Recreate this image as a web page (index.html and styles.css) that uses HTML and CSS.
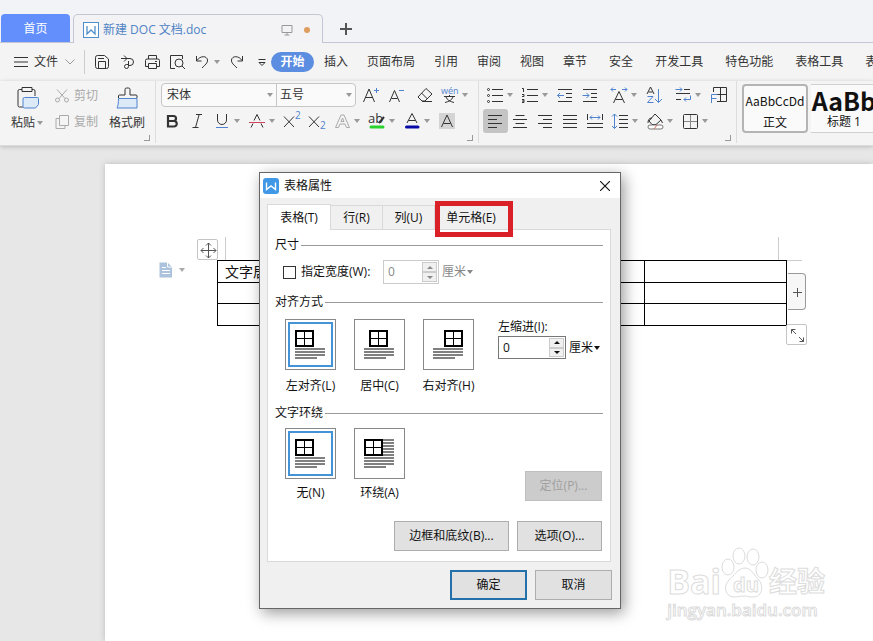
FILE: index.html
```html
<!DOCTYPE html>
<html lang="zh-CN">
<head>
<meta charset="utf-8">
<title>新建 DOC 文档.doc</title>
<link rel="stylesheet" href="styles.css">
</head>
<body>
<header class="tabstrip">
  <button class="home-tab">首页</button>
  <div class="doc-tab">
    <svg class="doc-logo" viewBox="0 0 16 16"><rect x=".5" y=".5" width="15" height="15" fill="#fff"/><path d="M4 4v8l4-4 4 4V4" stroke-width="1.3"/></svg>
    <span class="doc-name">新建 DOC 文档.doc</span>
    <svg class="doc-screen" viewBox="0 0 12 12"><path d="M1 1.500h10v7H1zM6 8.500v2.500M3.500 11h5"/></svg>
    <span class="unsaved"></span>
  </div>
  <button class="new-tab" aria-label="新建标签"><svg viewBox="0 0 12 12"><path d="M6 0v12M0 6h12" stroke-width="2"/></svg></button>
</header>

<nav class="menubar">
  <button class="file-menu">
    <svg class="burger" viewBox="0 0 14 10"><path d="M0 .5h14M0 5h14M0 9.500h14"/></svg>
    文件
    <svg class="chev" viewBox="0 0 10 6"><path d="M.5.5 5 5 9.500.5" stroke="#999"/></svg>
  </button>
  <div class="quick">
    <button class="tool" aria-label="保存"><svg viewBox="0 0 20 20"><path d="M3.500 5.500a2 2 0 0 1 2-2h7l4 3.500v7.500a2 2 0 0 1-2 2h-9a2 2 0 0 1-2-2zM6.500 16.500V9.500h7v7M6 6.500h6"/></svg></button>
    <button class="tool" aria-label="输出"><svg viewBox="0 0 20 20"><path d="M4 6.500h9a3.500 3.500 0 0 1 0 7h-1.500M7 3.500l3 3-3 3M11.500 9v5.500a2 2 0 1 1-2-2h2"/></svg></button>
    <button class="tool" aria-label="打印"><svg viewBox="0 0 20 20"><path d="M6.500 7V3.500h8V7M6 14.500H3.500v-6a1.500 1.500 0 0 1 1.500-1.500h11a1.500 1.500 0 0 1 1.500 1.500v6H15M6.500 11.500h8v5h-8zM13 9.500h2"/></svg></button>
    <button class="tool" aria-label="打印预览"><svg viewBox="0 0 20 20"><path d="M8 16.500H3.500v-13h12V7"/><circle cx="12" cy="11" r="4"/><path d="m15 14 3 3"/></svg></button>
    <button class="tool drop" aria-label="撤销"><svg viewBox="0 0 20 20"><path d="M4.500 4v5h5M5 8.500c3-5 10-5 10.500-.5.3 3-2.500 5-5.500 8"/></svg></button>
    <button class="tool" aria-label="恢复"><svg viewBox="0 0 20 20"><path d="M15.500 4v5h-5M15 8.500c-3-5-10-5-10.500-.5-.3 3 2.500 5 5.500 8"/></svg></button>
    <button class="tool" aria-label="更多"><svg viewBox="0 0 20 20"><path d="M6.500 7.500h7M7 10.500h6l-3 3z"/></svg></button>
  </div>
  <div class="menus">
    <button class="menu on">开始</button>
    <button class="menu">插入</button>
    <button class="menu">页面布局</button>
    <button class="menu">引用</button>
    <button class="menu">审阅</button>
    <button class="menu">视图</button>
    <button class="menu">章节</button>
    <button class="menu wide">安全</button>
    <button class="menu wide">开发工具</button>
    <button class="menu wide">特色功能</button>
    <button class="menu wide">表格工具</button>
    <button class="menu wide">表格样式</button>
  </div>
</nav>

<section class="ribbon">
  <div class="group clipboard">
    <button class="big drop-text">
      <svg viewBox="0 0 24 24"><path d="M7 4.500H4.500a1.500 1.500 0 0 0-1.500 1.500v14.500a1.500 1.500 0 0 0 1.500 1.500H8M17 4.500h1.500A1.500 1.500 0 0 1 20 6v5M7 2.500h10v4H7z"/><path class="bluefill" d="M9.500 12.500h13a1 1 0 0 1 1 1v6l-3 3.500h-11a1.500 1.500 0 0 1-1.500-1.500v-7.500a1.500 1.500 0 0 1 1.500-1.500z"/></svg>
      <span>粘贴</span>
    </button>
    <div class="pair">
      <button class="small" disabled><svg viewBox="0 0 16 16"><circle cx="3.500" cy="12" r="2"/><circle cx="12.500" cy="12" r="2"/><path d="M13 1.500 5 10.500M3 1.500l8 9"/></svg>剪切</button>
      <button class="small" disabled><svg viewBox="0 0 16 16"><path d="M5.500 1.500h9v10h-9zM5 4.500H2v10h9V12"/></svg>复制</button>
    </div>
    <button class="big">
      <svg viewBox="0 0 24 24"><path d="M3.500 13v-2a1 1 0 0 1 1-1H10V4.500A1.500 1.500 0 0 1 11.500 3h2A1.500 1.500 0 0 1 15 4.500V10h6a1 1 0 0 1 1 1v2"/><path class="bluefill" d="M3.500 13.500H22v9.500H2c1-2 1.500-5 1.500-9.500z"/></svg>
      <span>格式刷</span>
    </button>
  </div>

  <div class="group">
    <div class="row">
      <div class="combos">
        <span class="combo name"><select aria-label="字体"><option>宋体</option></select></span>
        <span class="combo size"><select aria-label="字号"><option>五号</option></select></span>
      </div>
      <button class="tool" aria-label="增大字号"><svg viewBox="0 0 20 20"><path d="M2.500 17 8 4l5.500 13M4.500 12.500h7"/><path class="b" d="M13 5.500h5M15.500 3v5"/></svg></button>
      <button class="tool" aria-label="减小字号"><svg viewBox="0 0 20 20"><path d="M3.500 17 8.500 5.500 13.500 17M5.500 13.500h6"/><path class="b" d="M13 5.500h5"/></svg></button>
      <button class="tool apart" aria-label="清除格式"><svg viewBox="0 0 20 20"><path d="m11 3.500 6 5.500-7 7H7l-4-4zM6.500 8l6 6M7 16.500h10"/></svg></button>
      <button class="tool drop" aria-label="拼音指南"><svg viewBox="0 0 20 20"><text class="btxt" x="1" y="9" font-size="9">wén</text><path d="M4 11.500h11M9.500 10v1.500M6 12c1 3 4 4.500 8 5.500M13 12c-1 3-4 4.500-8 5.500"/></svg></button>
    </div>
    <div class="row">
      <button class="tool" aria-label="加粗"><svg viewBox="0 0 20 20"><path stroke-width="2.200" d="M6 5h5.500a2.500 2.500 0 0 1 0 5H6zM6 10h6a2.600 2.600 0 0 1 0 5.500H6z"/></svg></button>
      <button class="tool" aria-label="倾斜"><svg viewBox="0 0 20 20"><path d="M9 3.500h6M5.500 16.500h6M12 4 8.500 16.500"/></svg></button>
      <button class="tool drop" aria-label="下划线"><svg viewBox="0 0 20 20"><path d="M5.500 3v6a4.500 4.500 0 0 0 9 0V3"/><path class="b" d="M4 16.500h12"/></svg></button>
      <button class="tool drop" aria-label="删除线"><svg viewBox="0 0 20 20"><path d="M4 16.500l2-4M16 16.500l-2-4M7 9.500l3-6 3 6"/><path d="M2 11.500h16" stroke="#d0455c"/></svg></button>
      <button class="tool" aria-label="上标"><svg viewBox="0 0 20 20"><path d="m2 5.500 10 10.500M12 5.500 2 16"/><text class="btxt" x="13" y="8" font-size="10">2</text></svg></button>
      <button class="tool" aria-label="下标"><svg viewBox="0 0 20 20"><path d="m2 5.500 10 10.500M12 5.500 2 16"/><text class="btxt" x="13" y="18" font-size="10">2</text></svg></button>
      <button class="tool drop faint" aria-label="文字效果"><svg viewBox="0 0 20 20"><path d="M3.500 16.500 9 4h3l5.500 12.500h-3L13 13H8l-1.500 3.500zM9 10.500h3L10.500 7z"/></svg></button>
      <button class="tool drop" aria-label="突出显示"><svg viewBox="0 0 20 20"><text class="ktxt" x="1" y="12" font-size="13">ab</text><path d="m12 12 5-6" stroke-width="2"/><path d="M4 16h12" stroke="#25d32c" stroke-width="3" stroke-linecap="round"/></svg></button>
      <button class="tool drop" aria-label="字体颜色"><svg viewBox="0 0 20 20"><path d="m5 12 5-9.500L15 12M6.500 9.500h7"/><path d="M4.500 16h11.500" stroke="#0909a8" stroke-width="3" stroke-linecap="round"/></svg></button>
      <button class="tool" aria-label="字符底纹"><svg viewBox="0 0 20 20"><path d="M2 2h16v16H2z" fill="#d4d4d4" stroke="none"/><path d="M4.500 16 10 4l5.500 12M6.500 12.500h7"/></svg></button>
    </div>
  </div>

  <div class="group">
    <div class="row">
      <button class="tool drop" aria-label="项目符号"><svg viewBox="0 0 20 20"><path d="M7 4.500h11M7 10.500h11M7 16.500h11"/><circle cx="3.500" cy="4.500" r="1"/><circle cx="3.500" cy="10.500" r="1"/><circle cx="3.500" cy="16.500" r="1"/></svg></button>
      <button class="tool drop" aria-label="编号"><svg viewBox="0 0 20 20"><path d="M7 4.500h11M7 10.500h11M7 16.500h11M2 3.500h1.500V7M2 9.500h2v2H2M2 14.500h2v3H2M2 16h2"/></svg></button>
      <button class="tool" aria-label="减少缩进"><svg viewBox="0 0 20 20"><path d="M3 4.500h14M11 8.500h6M11 12.500h6M3 16.500h14"/><path class="b" d="M9 10.500H2.500M5 8l-2.500 2.500L5 13"/></svg></button>
      <button class="tool" aria-label="增加缩进"><svg viewBox="0 0 20 20"><path d="M3 4.500h14M11 8.500h6M11 12.500h6M3 16.500h14"/><path class="b" d="M2.500 10.500H9M6.500 8 9 10.500 6.500 13"/></svg></button>
      <button class="tool drop apart" aria-label="中文版式"><svg viewBox="0 0 20 20"><path d="M4.500 18 10 6.500 15.500 18M6.500 14.500h7"/><path class="b" d="M2 4.500h5M4 2.500l-2 2 2 2M13 4.500h5M16 2.500l2 2-2 2"/></svg></button>
      <button class="tool" aria-label="排序"><svg viewBox="0 0 20 20"><path d="m3 9 3.500-7L10 9M4.500 7h4"/><path class="b" d="M3.500 11.500H9L3.500 17.500H9.500M14.500 4v13.500M11 14l3.500 3.500L18 14"/></svg></button>
      <button class="tool drop apart" aria-label="制表位"><svg viewBox="0 0 20 20"><path d="M11 4.500h6M3 8.500h14M3 14.500h5"/><path class="b" d="M2.500 4.500H9M7 2.500l2 2-2 2M17.500 10.500v4H11M13 12.500l-2 2 2 2"/></svg></button>
      <button class="tool" aria-label="显示网格"><svg viewBox="0 0 20 20"><path d="M5.500 7V2.500h13v14H9M12.500 2.500v14M9 9.500h9"/><path class="b" d="M3.500 18V9.500h6M3.500 13.500h5"/></svg></button>
    </div>
    <div class="row">
      <button class="tool pressed" aria-label="左对齐"><svg viewBox="0 0 20 20"><path d="M3 4.500h14M3 8.500h9M3 12.500h14M3 16.500h9"/></svg></button>
      <button class="tool" aria-label="居中对齐"><svg viewBox="0 0 20 20"><path d="M5.500 4.500h9M3 8.500h14M5.500 12.500h9M3 16.500h14"/></svg></button>
      <button class="tool" aria-label="右对齐"><svg viewBox="0 0 20 20"><path d="M3 4.500h14M8 8.500h9M3 12.500h14M8 16.500h9"/></svg></button>
      <button class="tool" aria-label="两端对齐"><svg viewBox="0 0 20 20"><path d="M3 4.500h14M3 8.500h14M3 12.500h14M3 16.500h14"/></svg></button>
      <button class="tool" aria-label="分散对齐"><svg viewBox="0 0 20 20"><path d="M2.500 3v6M17.500 3v6M2 12.500h16M2 16.500h16"/><path class="b" d="M5 6.500h10M7 4.500l-2 2 2 2M13 4.500l2 2-2 2"/></svg></button>
      <button class="tool drop" aria-label="行距"><svg viewBox="0 0 20 20"><path d="M9 4.500h9M9 8.500h9M9 12.500h9M9 16.500h9"/><path class="b" d="M4.500 3v14.500M2 5.500 4.500 3 7 5.500M2 15l2.500 2.500L7 15"/></svg></button>
      <button class="tool drop" aria-label="底纹"><svg viewBox="0 0 20 20"><path d="m10 3 6 6-5 4.500H7L4 10zM3 12c0-3 1-5 4-5M16 9l1.500 3"/><rect x="3" y="14" width="15" height="4" rx="2" stroke="#777" fill="#fff"/><path d="m9 18 3-4" stroke="#d07060"/></svg></button>
      <button class="tool drop" aria-label="边框"><svg viewBox="0 0 20 20"><rect x="3.500" y="3.500" width="14" height="14" rx="1"/><path stroke="#888" d="M10.500 4v13M4 10.500h13"/></svg></button>
    </div>
  </div>

  <div class="group styles">
    <button class="style current"><span class="sample">AaBbCcDd</span><span>正文</span></button>
    <button class="style"><span class="sample heading">AaBb</span><span>标题 1</span></button>
  </div>
</section>

<main class="canvas">
  <article class="page">
    <div class="table-zone">
      <table class="doc-table">
        <tr><td>文字居中</td><td></td><td></td><td></td></tr>
        <tr><td></td><td></td><td></td><td></td></tr>
        <tr><td></td><td></td><td></td><td></td></tr>
      </table>
      <span class="margin-mark left"></span>
      <span class="margin-mark right"></span>
      <span class="margin-line"></span>
      <button class="handle move" aria-label="移动表格"><svg viewBox="0 0 18 18"><path d="M9.500 2v15M2 9.500h15M7 4.500 9.500 2 12 4.500M7 14.500l2.500 2.500 2.500-2.500M4.500 7 2 9.500 4.500 12M14.500 7l2.500 2.500-2.500 2.500" stroke="#555"/></svg></button>
      <button class="handle add" aria-label="添加列"><svg viewBox="0 0 10 10"><path d="M5.500 1v9M1 5.500h9" stroke="#555"/></svg></button>
      <button class="handle resize" aria-label="缩放表格"><svg viewBox="0 0 18 18"><path d="M3.500 7.500v-4h4M3.500 3.500 8 8M15.500 11.500v4h-4M15.500 15.500 11 11" stroke="#555"/></svg></button>
      <button class="section-mark" aria-label="段落布局"><svg viewBox="0 0 14 16"><path d="M.5.5h8l4.500 4.500v10.500H.5z" fill="#adc3dd" stroke="none"/><path d="M8.500 0v5H14M3 5.500h4M3 8.500h8M3 11.500h8" stroke="#fff"/></svg></button>
    </div>
  </article>

  <div class="watermark">
    <div class="wm-top"><span>Bai</span>
      <svg viewBox="0 0 48 52"><ellipse cx="7" cy="20" rx="6" ry="8"/><ellipse cx="18" cy="9" rx="6" ry="8"/><ellipse cx="32" cy="10" rx="6" ry="8"/><ellipse cx="41" cy="23" rx="6" ry="8"/><path d="M24 21c6 0 9 7 13 11 6 6 5 18-5 18-5 0-5-1-9-1s-6 1-10 1C4 50 2 39 8 33c5-4 9-12 16-12z"/><text x="12" y="45" font-size="20" font-weight="700">du</text></svg>
      <span>经验</span></div>
    <div class="wm-url">jingyan.baidu.com</div>
  </div>
</main>

<div class="dialog" role="dialog" aria-labelledby="dlg-title">
  <div class="dlg-bar">
    <svg class="dlg-logo" viewBox="0 0 16 16"><rect width="16" height="16" rx="3" fill="#3f97e6" stroke="none"/><path d="M3.500 4.500v7L8 8l4.500 3.500v-7" stroke="#fff" stroke-width="1.400"/></svg>
    <span id="dlg-title">表格属性</span>
    <button class="close" aria-label="关闭"><svg viewBox="0 0 10 10"><path d="m0 0 10 10M10 0 0 10" stroke="#111" stroke-width="1.100"/></svg></button>
  </div>
  <div class="dlg-tabs" role="tablist">
    <button class="dtab active" role="tab">表格(T)</button>
    <button class="dtab" role="tab">行(R)</button>
    <button class="dtab" role="tab">列(U)</button>
    <button class="dtab marked" role="tab">单元格(E)</button>
  </div>
  <div class="panel">
    <fieldset>
      <legend>尺寸</legend>
      <div class="size-row">
        <input type="checkbox" id="fixw"><label for="fixw">指定宽度(W):</label>
        <span class="spin off"><input type="text" value="0" aria-label="宽度" disabled><span class="steps"><button class="up" aria-label="增加" disabled></button><button class="down" aria-label="减少" disabled></button></span></span>
        <span class="unit off"><select aria-label="宽度单位" disabled><option>厘米</option></select></span>
      </div>
    </fieldset>
    <fieldset class="align">
      <legend>对齐方式</legend>
      <div class="opts">
        <label class="opt"><input type="radio" name="al" checked><svg viewBox="0 0 49 49"><path class="grid" d="M10 11h17v15H10z"/><path class="thin" d="M18.500 11v15M10 18.500h17"/><path class="txt" d="M9 29h30M9 32h30M9 35h30M9 38h22"/></svg><span>左对齐(L)</span></label>
        <label class="opt"><input type="radio" name="al"><svg viewBox="0 0 49 49"><path class="grid" d="M15 11h17v15H15z"/><path class="thin" d="M23.500 11v15M15 18.500h17"/><path class="txt" d="M9 29h30M9 32h30M9 35h30M9 38h22"/></svg><span>居中(C)</span></label>
        <label class="opt"><input type="radio" name="al"><svg viewBox="0 0 49 49"><path class="grid" d="M21 11h17v15H21z"/><path class="thin" d="M29.500 11v15M21 18.500h17"/><path class="txt" d="M9 29h30M9 32h30M9 35h30M9 38h22"/></svg><span>右对齐(H)</span></label>
        <div class="indent">
          <label for="ind">左缩进(I):</label>
          <div class="indent-row">
            <span class="spin"><input type="text" id="ind" value="0"><span class="steps"><button class="up" aria-label="增加"></button><button class="down" aria-label="减少"></button></span></span>
            <span class="unit"><select aria-label="缩进单位"><option>厘米</option></select></span>
          </div>
        </div>
      </div>
    </fieldset>
    <fieldset class="wrap">
      <legend>文字环绕</legend>
      <div class="opts">
        <label class="opt"><input type="radio" name="wr" checked><svg viewBox="0 0 49 49"><path class="grid" d="M10 11h17v15H10z"/><path class="thin" d="M18.500 11v15M10 18.500h17"/><path class="txt" d="M9 29h30M9 32h30M9 35h30M9 38h22"/></svg><span>无(N)</span></label>
        <label class="opt"><input type="radio" name="wr"><svg viewBox="0 0 49 49"><path class="txt" d="M28 11h11M28 14h11M28 17h11M28 20h11M28 23h11M28 26h11M9 29h30M9 32h30M9 35h30M9 38h22"/><path class="grid" d="M10 11h17v15H10z"/><path class="thin" d="M18.500 11v15M10 18.500h17"/></svg><span>环绕(A)</span></label>
        <button class="btn std place" disabled>定位(P)...</button>
      </div>
    </fieldset>
    <div class="btns more"><button class="btn border">边框和底纹(B)...</button><button class="btn option">选项(O)...</button></div>
  </div>
  <div class="btns foot"><button class="btn std ok">确定</button><button class="btn std">取消</button></div>
</div>
</body>
</html>
```
FILE: styles.css
```css
* { box-sizing: border-box; }
html, body { height: 100%; }
body {
  margin: 0;
  position: relative;
  display: flex;
  flex-direction: column;
  overflow: hidden;
  background: #e7e7e7;
  color: #333;
  font: 12px/16px "Open Sans", "Noto Sans CJK SC", sans-serif;
}
button, input, select { font: inherit; color: inherit; margin: 0; padding: 0; border: 0; background: none; border-radius: 0; }
svg { display: block; fill: none; stroke: #333; flex: none; }
svg text { stroke: none; }
.b { stroke: #4f83cf; }
.btxt { fill: #4f83cf; }
.ktxt { fill: #333; }

/* window tabs */
.tabstrip { display: flex; align-items: flex-end; height: 43px; flex: none; padding-left: 1px; background: #f2f3f7; border-bottom: 1px solid #c3c6d6; }
.home-tab { width: 69px; height: 28px; padding-top: 2px; background: #628ffb; color: #fff; border-radius: 4px 4px 0 0; }
.doc-tab { display: flex; align-items: center; width: 250px; height: 29px; margin: 0 0 -1px 3px; padding: 1px 12px 0 9px; border: 1px solid #c3c6d6; border-bottom: 0; border-radius: 5px 5px 0 0; background: #f3f3f5; color: #4f83c4; }
.doc-logo { width: 16px; height: 16px; stroke: #4f8ecb; margin-right: 4px; }
.doc-name { flex: 1; white-space: nowrap; }
.doc-screen { width: 12px; height: 12px; stroke: #999; margin-right: 11px; }
.unsaved { width: 6px; height: 6px; border-radius: 50%; background: #dd9d5e; }
.new-tab { width: 12px; height: 12px; margin: 0 0 7px 17px; }
.new-tab svg { stroke: #555; }

/* menu bar */
.menubar { display: flex; align-items: center; height: 38px; flex: none; background: #f4f4f4; overflow: hidden; }
.file-menu { display: flex; flex: none; align-items: center; height: 24px; padding: 0 9px 0 14px; border-right: 1px solid #ccc; white-space: nowrap; }
.burger { width: 14px; height: 10px; margin-right: 6px; }
.chev { width: 10px; height: 6px; margin-left: 7px; }
.quick { display: flex; flex: none; margin-left: 5px; }
.menus { display: flex; flex: none; gap: 19px; margin-left: -4px; }
.menu { flex: none; height: 20px; white-space: nowrap; }
.menu.on { width: 43px; margin-right: -9px; border-radius: 10px; background: #5b8de0; color: #fff; font-weight: 700; }
.menu.wide { margin-left: 3px; }

/* ribbon */
.ribbon { display: flex; height: 65px; flex: none; background: #f4f4f4; border-bottom: 1px solid #dcdcdc; box-shadow: 0 1px 4px #bbb; z-index: 1; overflow: hidden; }
.group { flex: none; height: 62px; padding: 1px 5px 0 4px; border-right: 1px solid #ddd; position: relative; }
.group:not(.styles)::after { content: ""; position: absolute; right: 5px; bottom: 2px; width: 5px; height: 5px; border: solid #999; border-width: 0 1px 1px 0; }
.row { display: flex; align-items: center; height: 26px; }
.tool { display: flex; align-items: center; flex: none; width: 25px; height: 24px; padding-left: 2px; position: relative; }
.tool svg { width: 20px; height: 20px; }
.drop { width: 35px; }
.drop::after, .drop-text span::after, .combo::after, .unit::after { content: ""; width: 0; border: 3px solid transparent; border-top: 4px solid #999; border-bottom: 0; }
.drop::after { margin-left: 2px; }
.faint svg { stroke: #aaa; }
.apart { margin-left: 4px; }
.pressed { background: #c4c4c4; border-radius: 3px; }
.clipboard { display: flex; width: 156px; padding: 4px 0 0 8px; }
.big { display: flex; flex-direction: column; align-items: center; width: 38px; height: 52px; gap: 6px; white-space: nowrap; }
.big svg { width: 24px; height: 24px; }
.drop-text span { display: flex; align-items: center; gap: 2px; }
.bluefill { fill: #dce9f7; stroke: #4f83cf; }
.pair { display: flex; flex-direction: column; gap: 6px; width: 50px; margin: 1px 4px 0 8px; }
.small { display: flex; align-items: center; gap: 4px; height: 20px; color: #aaa; white-space: nowrap; }
.small svg { width: 16px; height: 16px; stroke: #aaa; }
.combos { display: flex; width: 195px; height: 24px; margin: 0 3px 0 1px; border: 1px solid #c6c6c6; border-radius: 4px; background: #fafafa; }
.combo { display: flex; align-items: center; padding: 0 3px 0 5px; }
.combo select, .unit select { appearance: none; flex: 1; outline: 0; opacity: 1; }
.combo.name { width: 115px; border-right: 1px solid #c6c6c6; }
.combo.size { flex: 1; padding-left: 3px; }
.styles { display: flex; gap: 3px; flex: 1 0 140px; padding: 3px 0 0 5px; border: 0; }
.style { display: flex; flex-direction: column; align-items: center; width: 66px; height: 49px; flex: none; border: solid #d0d0d0; border-width: 1px 0; background: #fafafa; color: #111; }
.style.current { border: 2px solid #b4b4b4; border-radius: 4px; }
.style .sample { height: 29px; line-height: 30px; font-family: "Noto Sans CJK SC", sans-serif; font-size: 12px; }
.style .heading { font-size: 25px; font-weight: 700; }

/* document */
.canvas { flex: 1; position: relative; min-height: 0; padding: 18px 0 0 105px; overflow: hidden; }
.page { min-height: 100%; padding: 96px 0 0 112px; background: #fff; box-shadow: 0 0 6px #bbb; }
.table-zone { position: relative; width: 570px; }
.doc-table { width: 570px; border-collapse: collapse; table-layout: fixed; color: #111; font-size: 14px; }
.doc-table td { height: 22px; padding: 0 7px; border: 1px solid #000; line-height: 20px; }
.doc-table tr:nth-child(2) td { height: 21px; }
.margin-mark { position: absolute; top: -23px; width: 1px; height: 23px; background: #ccc; }
.margin-mark.left { left: 8px; }
.margin-mark.right { right: 8px; }
.margin-line { position: absolute; top: 0; left: 100%; width: 15px; height: 1px; background: #ccc; }
.handle { position: absolute; display: grid; place-items: center; width: 21px; height: 21px; border: 1px solid #c4c4c4; border-radius: 2px; background: #fff; }
.handle svg { width: 18px; height: 18px; }
.move { left: -20px; top: -21px; }
.add { left: 571px; top: 13px; width: 18px; height: 37px; border-color: #999; border-left: 0; border-radius: 0 4px 4px 0; background: #f7f7f7; }
.add svg { width: 10px; height: 10px; }
.resize { left: 569px; top: 64px; }
.section-mark { position: absolute; left: -58px; top: 2px; display: flex; align-items: center; gap: 6px; }
.section-mark svg { width: 14px; height: 16px; }
.section-mark::after { content: ""; border: 3px solid transparent; border-top: 4px solid #aaa; border-bottom: 0; }

/* watermark */
.watermark { position: absolute; right: 48px; bottom: 20px; color: #fff; white-space: nowrap; -webkit-text-stroke: 1px #dcdcdc; }
.wm-top { display: flex; align-items: flex-end; height: 54px; font-size: 28px; line-height: 36px; font-weight: 700; }
.wm-top span:first-child { font-size: 34px; }
.wm-top svg { width: 48px; height: 52px; fill: #fff; stroke: #dcdcdc; }
.wm-top text { stroke: #dcdcdc; stroke-width: 1px; }
.wm-url { font: 17px/22px "Open Sans", sans-serif; font-weight: 600; }

/* dialog */
.dialog { position: absolute; left: 259px; top: 172px; width: 362px; z-index: 2; padding-bottom: 8px; border: 1px solid #666; background: #f0f0f0; color: #111; box-shadow: 3px 4px 14px rgba(0, 0, 0, .4); }
.dlg-bar { display: flex; align-items: center; height: 25px; padding: 0 10px 0 3px; background: #fff; }
.dlg-bar span { flex: 1; }
.dlg-logo { width: 16px; height: 16px; margin-right: 5px; }
.close { width: 10px; height: 10px; }
.dlg-tabs { display: flex; align-items: flex-end; height: 31px; padding-left: 7px; }
.dtab { height: 24px; width: 52px; border: 1px solid #d9d9d9; border-width: 1px 1px 0 0; background: #f0f0f0; position: relative; }
.dtab.active { width: 64px; height: 26px; margin-bottom: -1px; border-left-width: 1px; background: #fff; z-index: 1; }
.dtab.marked { width: 76px; border-right: 0; padding-right: 4px; }
.dtab.marked::after { content: ""; position: absolute; inset: -5px -2px -8px 0; border: 5px solid #da2128; z-index: 2; }
.panel { margin: 0 9px 8px 7px; padding: 7px 7px 10px; border: 1px solid #d9d9d9; background: #fff; }
fieldset { margin: 0; padding: 0; border: 0; min-width: 0; }
legend { display: flex; align-items: center; gap: 2px; width: 100%; padding: 0; }
legend::after { content: ""; flex: 1; height: 1px; background: #999; }
.size-row { display: flex; align-items: center; height: 24px; margin: 7px 0 10px 8px; }
.size-row input[type="checkbox"] { appearance: none; width: 13px; height: 13px; margin-right: 5px; border: 1px solid #333; background: #fff; }
.size-row label { width: 82px; white-space: nowrap; }
.spin { display: flex; width: 68px; height: 23px; padding: 1px; border: 1px solid #777; background: #fff; }
.spin input { flex: 1; min-width: 0; padding-left: 3px; outline: 0; }
.steps { display: flex; flex-direction: column; width: 15px; }
.steps button { display: grid; place-items: center; flex: 1; border: 1px solid #ccc; background: #f0f0f0; }
.steps button::after { content: ""; border: 3px solid transparent; }
.up::after { border-top: 0 !important; border-bottom-color: currentColor !important; }
.down::after { border-bottom: 0 !important; border-top-color: currentColor !important; }
.off.spin { width: 56px; height: 24px; border-color: #ccc; color: #888; }
.unit { display: flex; align-items: center; margin-left: 3px; }
.unit select { width: 25px; flex: none; }
.unit::after { border-top-color: #111; }
.unit.off { color: #888; }
.unit.off::after { border-top-color: #888; }
.opts { display: flex; gap: 18px; margin: 9px 0 11px 10px; }
.wrap .opts { margin: 7px 0 20px 10px; }
.opt { display: flex; flex-direction: column; align-items: center; gap: 8px; width: 51px; white-space: nowrap; position: relative; }
.wrap .opt { gap: 6px; }
.opt input { position: absolute; opacity: 0; }
.opt svg { width: 51px; height: 51px; border: 1px solid #888; }
.opt input:checked + svg { outline: 2px solid #4493d6; outline-offset: -5px; }
.grid { stroke: #000; stroke-width: 2; fill: #fff; }
.thin { stroke: #000; }
.txt { stroke: #808080; stroke-width: 2; }
.indent { margin-left: 6px; }
.indent-row { display: flex; align-items: center; margin-top: 1px; }
.btn { height: 30px; border: 1px solid #adadad; background: #e1e1e1; }
.std { width: 77px; }
.place { align-self: flex-end; margin: 0 1px 0 auto; background: #ccc; border-color: #bfbfbf; color: #a0a0a0; }
.ok { border: 2px solid #2470ab; }
.btns { display: flex; justify-content: flex-end; gap: 8px; padding-right: 8px; }
.more { padding-right: 1px; }
.border { width: 115px; }
.option { width: 85px; }
```
